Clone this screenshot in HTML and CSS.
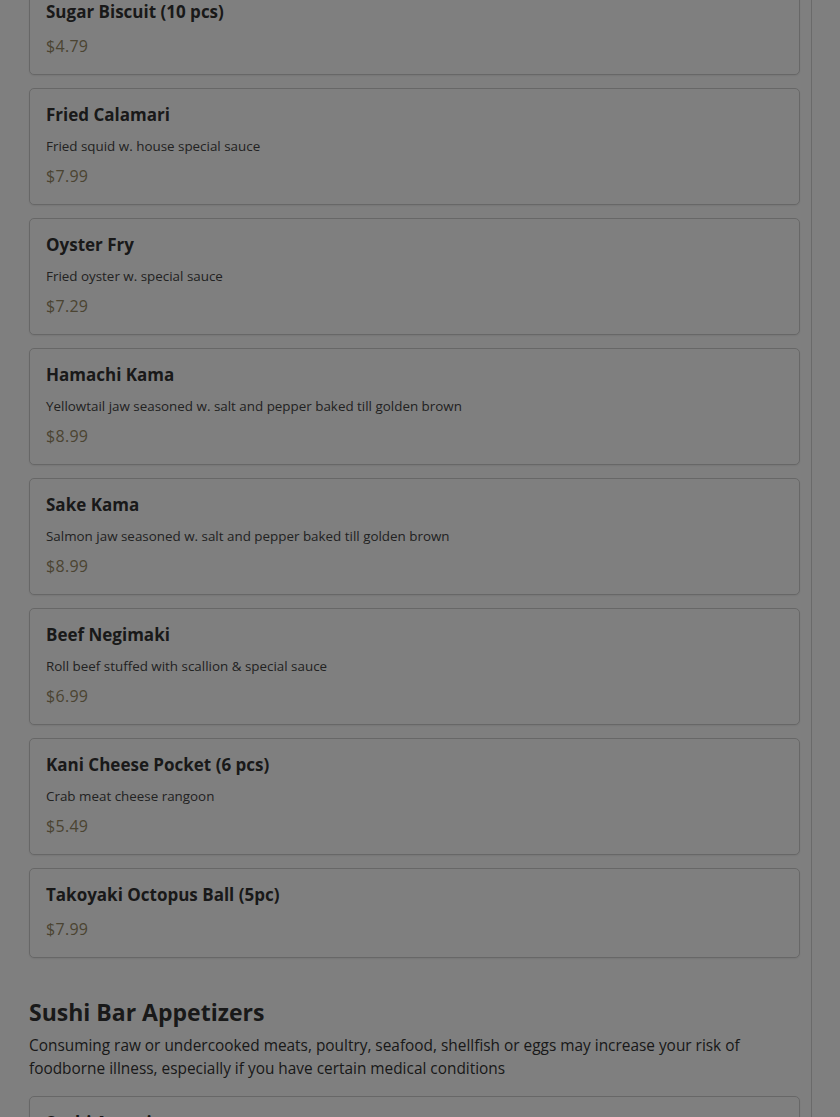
FILE: index.html
```html
<!DOCTYPE html>
<html lang="en">
<head>
<meta charset="utf-8">
<title>Menu</title>
<link rel="stylesheet" href="styles.css">
</head>
<body>
<div class="page">
  <main class="menu">
    <section class="section">
      <div class="items first">
        <div class="card">
          <h3 class="name">Sugar Biscuit (10 pcs)</h3>
          <div class="price">$4.79</div>
        </div>
        <div class="card">
          <h3 class="name">Fried Calamari</h3>
          <p class="desc">Fried squid w. house special sauce</p>
          <div class="price">$7.99</div>
        </div>
        <div class="card">
          <h3 class="name">Oyster Fry</h3>
          <p class="desc">Fried oyster w. special sauce</p>
          <div class="price">$7.29</div>
        </div>
        <div class="card">
          <h3 class="name">Hamachi Kama</h3>
          <p class="desc">Yellowtail jaw seasoned w. salt and pepper baked till golden brown</p>
          <div class="price">$8.99</div>
        </div>
        <div class="card">
          <h3 class="name">Sake Kama</h3>
          <p class="desc">Salmon jaw seasoned w. salt and pepper baked till golden brown</p>
          <div class="price">$8.99</div>
        </div>
        <div class="card">
          <h3 class="name">Beef Negimaki</h3>
          <p class="desc">Roll beef stuffed with scallion &amp; special sauce</p>
          <div class="price">$6.99</div>
        </div>
        <div class="card">
          <h3 class="name">Kani Cheese Pocket (6 pcs)</h3>
          <p class="desc">Crab meat cheese rangoon</p>
          <div class="price">$5.49</div>
        </div>
        <div class="card">
          <h3 class="name">Takoyaki Octopus Ball (5pc)</h3>
          <div class="price">$7.99</div>
        </div>
      </div>
    </section>
    <section class="section">
      <h2 class="section-title">Sushi Bar Appetizers</h2>
      <p class="section-note">Consuming raw or undercooked meats, poultry, seafood, shellfish or eggs may increase your risk of foodborne illness, especially if you have certain medical conditions</p>
      <div class="items">
        <div class="card">
          <h3 class="name">Sushi Appetizer</h3>
          <div class="price">$8.99</div>
        </div>
      </div>
    </section>
  </main>
</div>
<div class="overlay"></div>
</body>
</html>
```

FILE: styles.css
```css
* { box-sizing: border-box; }

html, body {
  margin: 0;
  padding: 0;
  height: 100%;
  overflow: hidden;
}

body {
  background: #ffffff;
  font-family: "Open Sans", "Noto Sans", sans-serif;
  color: #333333;
}

.page {
  width: 812px;
  border-right: 1px solid #d4d4d4;
  min-height: 1117px;
  padding: 0 11px 0 29px;
}

.menu {
  display: flex;
  flex-direction: column;
}

.items {
  display: flex;
  flex-direction: column;
  gap: 13px;
}

.items.first {
  margin-top: -15px;
}

.card {
  border: 1px solid #cfcfcf;
  border-radius: 5px;
  background: #ffffff;
  box-shadow: 0 1px 2px rgba(0, 0, 0, 0.08);
  padding: 14px 16px 17px;
  display: flex;
  flex-direction: column;
}

.name {
  margin: 0;
  font-size: 17px;
  line-height: 24px;
  font-weight: 700;
  color: #333333;
}

.desc {
  margin: 10px 0 0;
  font-size: 13.4px;
  line-height: 18px;
  color: #444444;
}

.price {
  margin-top: 11px;
  font-size: 16px;
  line-height: 22px;
  letter-spacing: 0.3px;
  color: #968864;
}

.desc + .price {
  margin-top: 10px;
}

.section-title {
  margin: 38px 0 0;
  font-size: 23px;
  line-height: 32px;
  font-weight: 700;
  color: #333333;
}

.section-note {
  margin: 6px 0 16px;
  max-width: 740px;
  font-size: 15.4px;
  line-height: 23px;
  color: #333333;
}

.overlay {
  position: fixed;
  inset: 0;
  background: rgba(0, 0, 0, 0.5);
}
```
